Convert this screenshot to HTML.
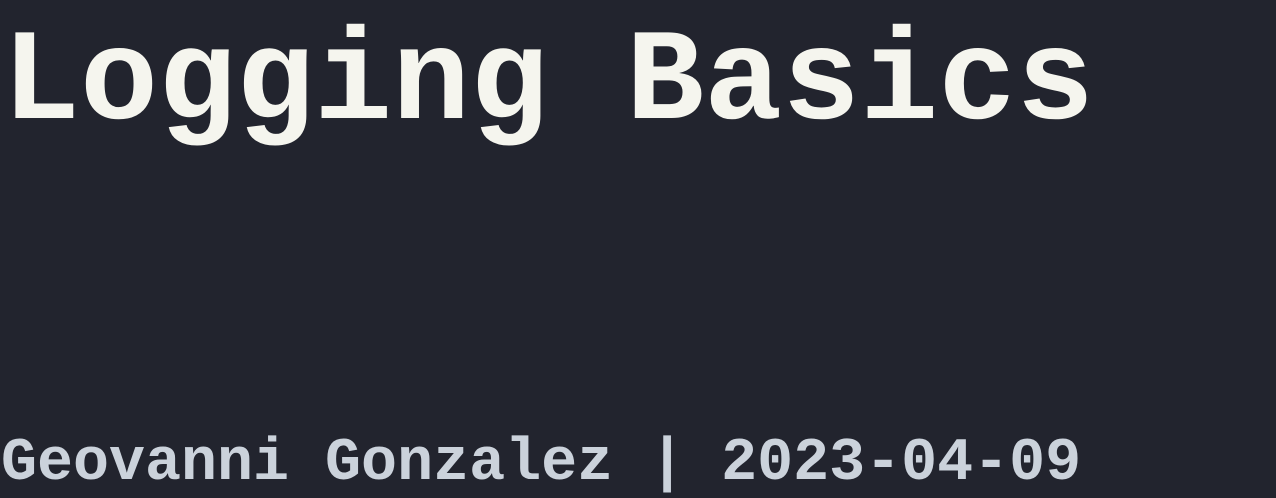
<!DOCTYPE html>
<html><head><style>
html,body{margin:0;padding:0;}
body{width:1276px;height:498px;overflow:hidden;background:#22242e;position:relative;font-family:"Liberation Mono",monospace;font-weight:bold;}
.t{position:absolute;left:2px;font-size:130px;line-height:1;color:#f5f5ee;white-space:nowrap;}
.s{position:absolute;left:1px;font-size:60px;line-height:1;color:#cbd2db;white-space:nowrap;}
</style></head><body>
<div class="t" style="top:20px">Logging Basics</div>
<div class="s" style="top:434px">Geovanni Gonzalez | 2023-04-09</div>
</body></html>
